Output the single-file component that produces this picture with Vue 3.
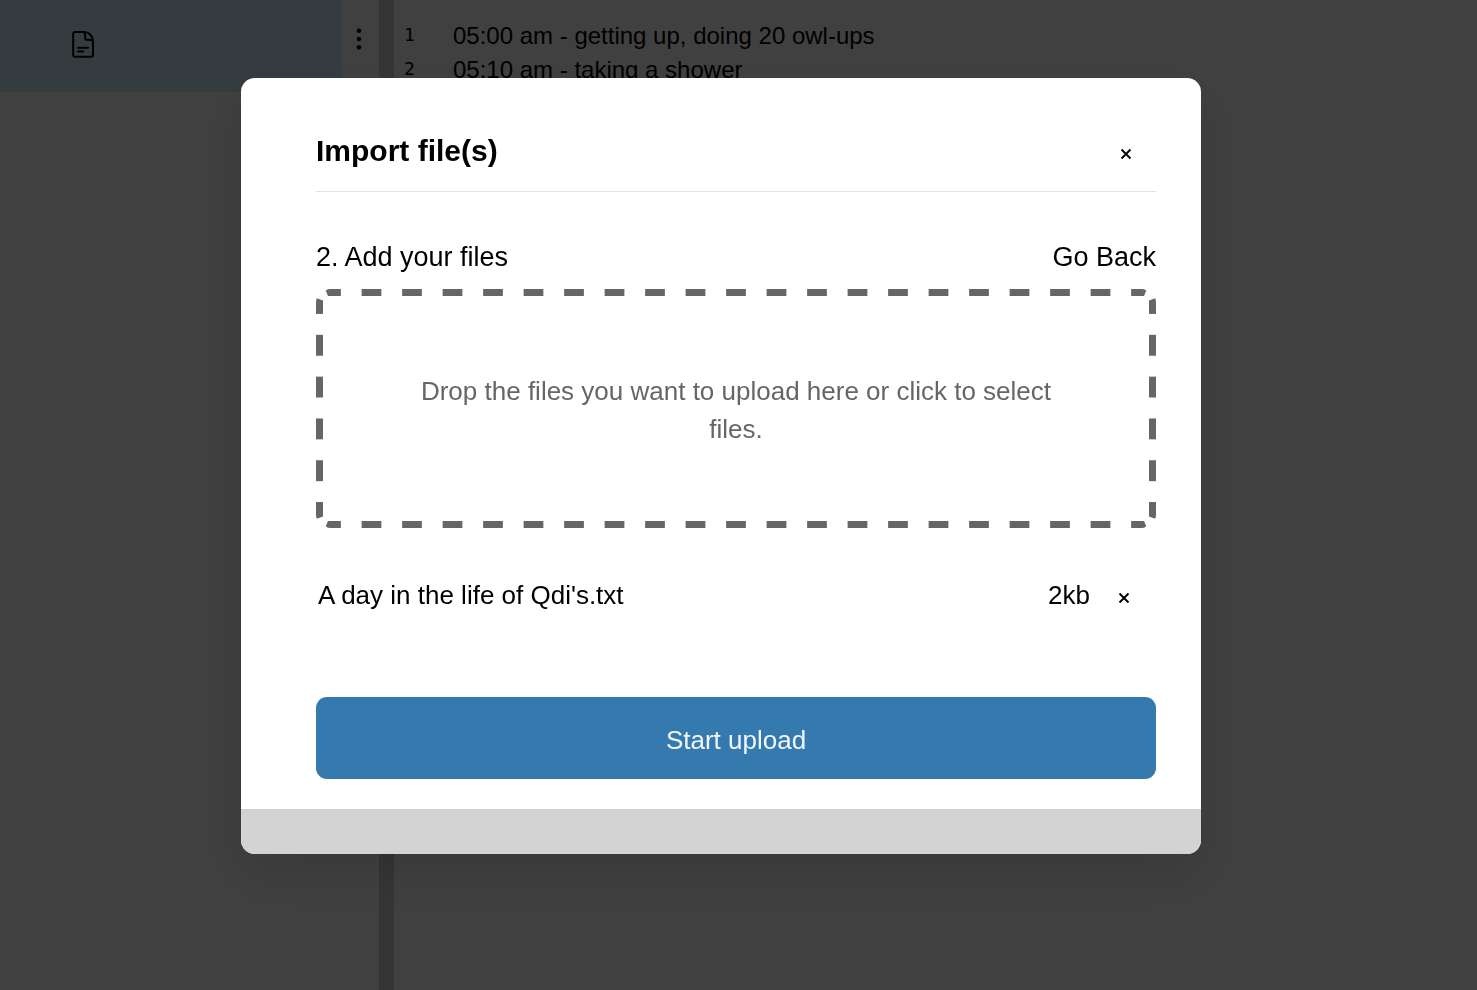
<script setup>
import { ref } from 'vue'

const lines = ref([
  '05:00 am - getting up, doing 20 owl-ups',
  '05:10 am - taking a shower',
])
const files = ref([{ name: "A day in the life of Qdi's.txt", size: '2kb' }])
const corners = ['top-left', 'top-right', 'bottom-left', 'bottom-right']
const removeFile = (index) => files.value.splice(index, 1)
</script>

<template>
  <div class="app">
    <aside class="sidebar">
      <div class="entry">
        <svg class="doc-icon" viewBox="0 0 22 27" fill="none" stroke="#000" stroke-width="2" stroke-linecap="round" stroke-linejoin="round" aria-hidden="true">
          <path d="M1.200 2.800a1.800 1.800 0 0 1 1.800-1.800h9.500c4.700.3 8.300 4 8.500 9v14a1.800 1.800 0 0 1-1.800 1.800H3a1.800 1.800 0 0 1-1.800-1.800z" />
          <path d="M11.500 1c1.300.8 1.700 1.800 1.700 3.200v3a1.600 1.600 0 0 0 1.600 1.600h3c1.400 0 2.500.5 3.200 1.700" />
          <path d="M6 16.700h10M6 20.500h5.300" />
        </svg>
      </div>
      <button class="more" type="button" aria-label="More options">
        <svg viewBox="0 0 6 22" aria-hidden="true">
          <circle cx="3" cy="2.700" r="2.300" />
          <circle cx="3" cy="11" r="2.300" />
          <circle cx="3" cy="19.300" r="2.300" />
        </svg>
      </button>
    </aside>
    <div class="divider"></div>
    <main class="editor">
      <ol>
        <li v-for="(line, i) in lines" :key="i">
          <span class="num">{{ i + 1 }}</span>
          <span>{{ line }}</span>
        </li>
      </ol>
    </main>

    <div class="overlay">
      <section class="modal" role="dialog" aria-modal="true" aria-labelledby="modal-title">
        <div class="body">
          <header>
            <h1 id="modal-title">Import file(s)</h1>
            <button class="close" type="button" aria-label="Close">
              <svg viewBox="0 0 12 12" aria-hidden="true"><path d="M1.500 1.500l9 9M10.500 1.500l-9 9" /></svg>
            </button>
          </header>
          <div class="step">
            <h2>2. Add your files</h2>
            <button class="back" type="button">Go Back</button>
          </div>
          <button class="dropzone" type="button">
            <svg v-for="corner in corners" :key="corner" class="corner" :class="corner" viewBox="0 0 15 15" aria-hidden="true">
              <path d="M15 0H13.500Q11.500.2 9.700 1.500L12 7H15Z" />
              <path d="M0 15V13Q.1 11 .9 9.200L7 11.500V15Z" />
            </svg>
            Drop the files you want to upload here or click to select files.
          </button>
          <ul class="files">
            <li v-for="(file, i) in files" :key="file.name">
              <span class="name">{{ file.name }}</span>
              <span class="size">{{ file.size }}</span>
              <button class="remove" type="button" :aria-label="'Remove ' + file.name" @click="removeFile(i)">
                <svg viewBox="0 0 12 12" aria-hidden="true"><path d="M1.500 1.500l9 9M10.500 1.500l-9 9" /></svg>
              </button>
            </li>
          </ul>
          <button class="upload" type="button">Start upload</button>
        </div>
        <footer></footer>
      </section>
    </div>
  </div>
</template>

<style>
body {
  margin: 0;
}
</style>

<style scoped>
* {
  box-sizing: border-box;
}

.app {
  display: flex;
  min-height: 100vh;
  background: #fff;
  color: #000;
  font-family: "Liberation Sans", Arial, sans-serif;
  font-size: 26px;
}

button {
  padding: 0;
  border: 0;
  background: none;
  color: inherit;
  font: inherit;
  cursor: pointer;
}

svg {
  display: block;
}

h1,
h2,
ol,
ul {
  margin: 0;
  padding: 0;
  list-style: none;
}

.sidebar {
  display: flex;
  align-items: flex-start;
  flex: 0 0 379px;
}

.entry {
  flex: 1;
  height: 92px;
  padding: 31px 72px;
  background: #d4f0fc;
}

.doc-icon {
  width: 22px;
  height: 27px;
}

.more {
  width: 37px;
  padding: 28px 14px;
}

.more svg {
  width: 6px;
  height: 22px;
}

.divider {
  flex: 0 0 15px;
  background: #d4d4d4;
}

.editor {
  flex: 1;
  padding: 19px 10px;
}

.editor li {
  display: flex;
  font-size: 24px;
  line-height: 34px;
}

.num {
  flex: 0 0 49px;
  font-family: "DejaVu Sans Mono", monospace;
  font-size: 18px;
  line-height: 32px;
}

.overlay {
  position: fixed;
  inset: 0;
  display: flex;
  justify-content: center;
  align-items: flex-start;
  padding: 78px 35px 40px 0;
  background: rgba(0, 0, 0, 0.75);
}

.modal {
  width: 100%;
  max-width: 960px;
  overflow: hidden;
  border-radius: 14px;
  background: #fff;
  box-shadow: 0 20px 56px rgba(0, 0, 0, 0.13);
}

.body {
  padding: 45px 45px 30px 75px;
}

header {
  display: flex;
  justify-content: space-between;
  align-items: center;
  height: 69px;
  padding: 0 24px 13px 0;
  border-bottom: 1px solid #e2e2e2;
}

h1 {
  font-size: 30px;
  line-height: 36px;
}

.close,
.remove {
  padding: 6px 0 0;
}

.close svg,
.remove svg {
  width: 12px;
  height: 12px;
  fill: none;
  stroke: #000;
  stroke-width: 1.9;
}

.step {
  display: flex;
  justify-content: space-between;
  align-items: center;
  margin-top: 46px;
  font-size: 27px;
  line-height: 38px;
}

h2 {
  font-size: inherit;
  font-weight: 400;
}

.dropzone {
  position: relative;
  display: block;
  width: 100%;
  margin-top: 13px;
  padding: 83px 97px 80px;
  color: #666;
  line-height: 38px;
}

/* Long dashes along the edges; each tile is half dash, gap, half dash. */
.dropzone::before,
.dropzone::after {
  content: "";
  position: absolute;
}

.dropzone::before {
  inset: 0 15px;
  --dash: linear-gradient(90deg, #666 25%, transparent 25% 75%, #666 75%);
  background: var(--dash) 0 0 / 40px 7px, var(--dash) 0 100% / 40px 7px;
  background-repeat: round no-repeat;
}

.dropzone::after {
  inset: 15px 0;
  --dash: linear-gradient(#666 25%, transparent 25% 75%, #666 75%);
  background: var(--dash) 0 0 / 7px 41px, var(--dash) 100% 0 / 7px 41px;
  background-repeat: no-repeat round;
}

.corner {
  position: absolute;
  width: 15px;
  height: 15px;
  fill: #666;
}

.top-left {
  top: 0;
  left: 0;
}

.top-right {
  top: 0;
  right: 0;
  transform: scaleX(-1);
}

.bottom-left {
  bottom: 0;
  left: 0;
  transform: scaleY(-1);
}

.bottom-right {
  right: 0;
  bottom: 0;
  transform: rotate(180deg);
}

.files {
  margin-top: 48px;
  padding: 0 26px 0 2px;
}

.files li {
  display: flex;
  align-items: center;
  line-height: 38px;
}

.name {
  flex: 1;
}

.size {
  margin-right: 28px;
}

.upload {
  display: block;
  width: 100%;
  height: 82px;
  margin-top: 83px;
  padding-top: 4px;
  border-radius: 11px;
  background: #347aae;
  color: #f2f6fa;
}

footer {
  height: 45px;
  background: #d3d3d3;
}
</style>
